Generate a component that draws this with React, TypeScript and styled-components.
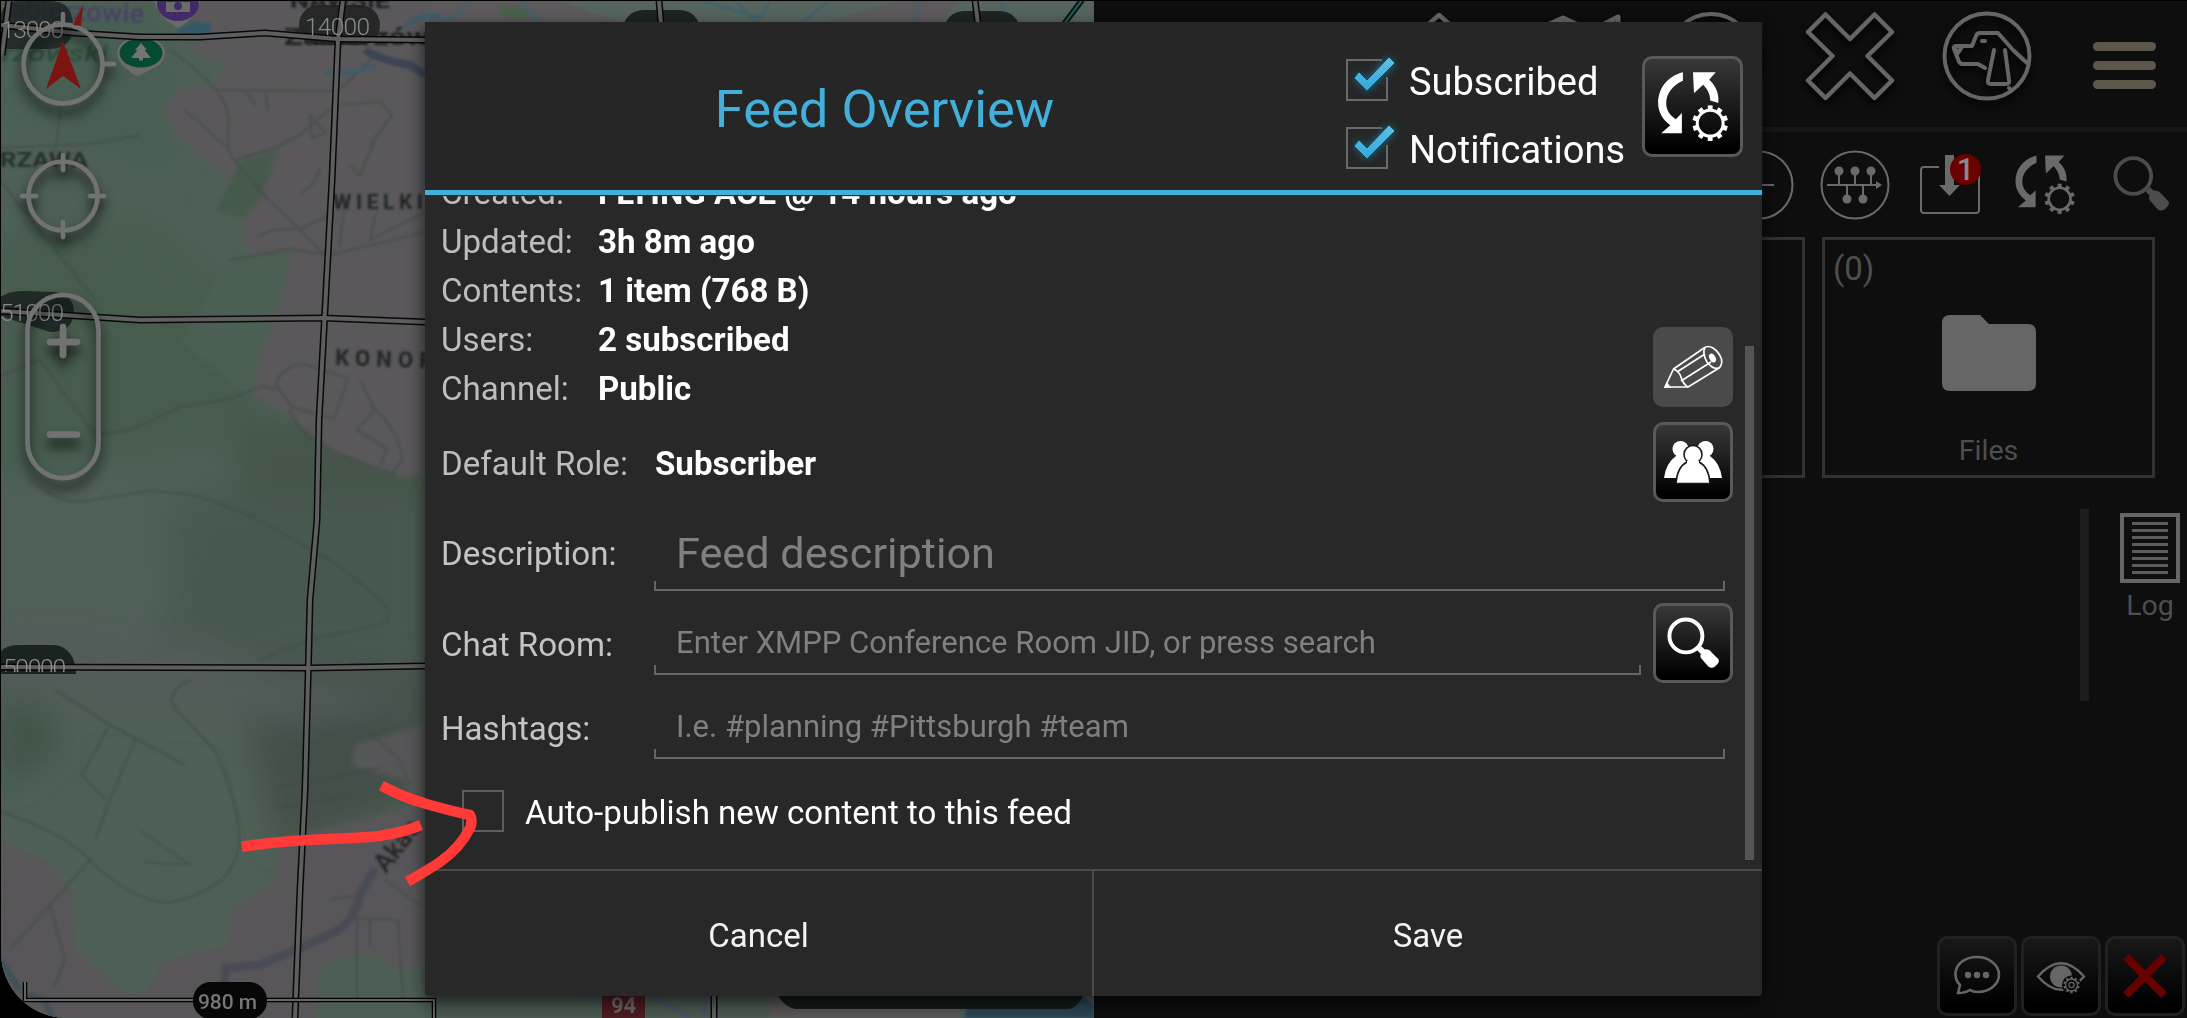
import React from 'react';
import styled, { createGlobalStyle } from 'styled-components';

const Global = createGlobalStyle`
  * { box-sizing: border-box; }
  body { margin: 0; background: #000; font-family: Roboto, "Noto Sans", sans-serif; }
`;

const Screen = styled.main`
  position: relative;
  display: flex;
  width: 2187px;
  height: 1018px;
  padding: 1px 0 0 1px;
  overflow: hidden;
  background: #000;
`;

const MapPane = styled.section`
  flex: 0 0 1093px;
  height: 1017px;
  overflow: hidden;
  border-bottom-left-radius: 66px;
  background: #4e6156;
`;

const MapSvg = styled.svg`
  display: block;
  width: 1093px;
  height: 1017px;
`;

/* ---------- right hand tool pane ---------- */

const ToolPane = styled.section`
  flex: 1;
  display: flex;
  flex-direction: column;
  min-width: 0;
  background: #0e0e0e;
`;

const TopBar = styled.header`
  display: flex;
  justify-content: flex-end;
  align-items: flex-start;
  flex: 0 0 131px;
  gap: 43px;
  padding: 8px 31px 0 0;
  border-bottom: 5px solid #171717;
`;

const TopIcon = styled.svg`
  flex: 0 0 94px;
  height: 94px;
  fill: none;
  stroke: #666;
  stroke-width: 4;
  stroke-linejoin: round;
  stroke-linecap: round;
  overflow: visible;
  filter: drop-shadow(0 5px 4px #000);
`;

const MenuIcon = styled.div`
  display: flex;
  flex-direction: column;
  gap: 10px;
  width: 63px;
  margin: 33px 0 0 16px;
`;

const MenuBar = styled.span`
  height: 9px;
  border-radius: 5px;
  background: #5c574b;
`;

const ToolRow = styled.nav`
  display: flex;
  justify-content: flex-end;
  align-items: center;
  flex: 0 0 105px;
  gap: 25px;
  padding-right: 12px;
`;

const ToolCell = styled.div`
  position: relative;
  display: flex;
  width: 70px;
  height: 70px;
`;

const ToolSvg = styled.svg`
  width: 70px;
  height: 70px;
  fill: none;
  stroke: #6a6a6a;
  stroke-width: 2;
`;

const Badge = styled.span`
  position: absolute;
  left: 35px;
  top: 4px;
  width: 31px;
  height: 31px;
  border-radius: 50%;
  background: #6a0000;
  color: #8a8a8a;
  font-size: 31px;
  font-weight: 500;
  line-height: 31px;
  text-align: center;
`;

const Cards = styled.div`
  display: flex;
  justify-content: flex-end;
  flex: 0 0 241px;
  gap: 17px;
  padding-right: 32px;
`;

const Card = styled.article`
  display: flex;
  flex-direction: column;
  width: 333px;
  padding: 9px 8px 6px;
  border: 3px solid #323232;
  color: #4e4e4e;
`;

const CardCount = styled.span`
  font-size: 33px;
  line-height: 40px;
`;

const FolderSvg = styled.svg`
  width: 94px;
  height: 76px;
  margin: 26px auto 0;
`;

const CardName = styled.span`
  margin-top: auto;
  font-size: 28.5px;
  line-height: 36px;
  text-align: center;
`;

const SideRow = styled.div`
  display: flex;
  justify-content: flex-end;
  align-items: flex-start;
  margin-top: 31px;
  padding-right: 7px;
`;

const SideTrack = styled.span`
  width: 9px;
  height: 192px;
  margin-right: 31px;
  background: #1d1d1d;
`;

const LogItem = styled.div`
  display: flex;
  flex-direction: column;
  align-items: center;
  width: 60px;
  padding-top: 4px;
  color: #4e4e4e;
  font-size: 28.5px;
  line-height: 34px;
`;

const LogPage = styled.div`
  display: flex;
  flex-direction: column;
  justify-content: space-between;
  width: 60px;
  height: 70px;
  margin-bottom: 6px;
  padding: 5px 8px;
  border: 4px solid #666;
`;

const LogLine = styled.span`
  height: 2.5px;
  background: #5c5c5c;
`;

const BottomRow = styled.footer`
  display: flex;
  justify-content: flex-end;
  gap: 4px;
  margin-top: auto;
  padding: 0 2px 2px 0;
`;

const DimButton = styled.button`
  width: 80px;
  height: 80px;
  padding: 0;
  border: 3px solid #212121;
  border-radius: 10px;
  background: linear-gradient(#181818, #000 90%);
`;

const DimSvg = styled.svg`
  display: block;
  width: 74px;
  height: 74px;
`;

/* ---------- dialog ---------- */

const Dialog = styled.section`
  position: absolute;
  left: 425px;
  top: 22px;
  display: flex;
  flex-direction: column;
  width: 1337px;
  height: 974px;
  border-radius: 2px 2px 4px 4px;
  background: #282828;
  box-shadow: 0 6px 18px rgba(0, 0, 0, 0.65);
`;

const DialogHeader = styled.header`
  display: flex;
  align-items: center;
  flex: 0 0 173px;
  padding-right: 19px;
  border-bottom: 5px solid #42b0da;
  background: #262626;
  box-shadow: 0 1px 1px #15323e;
  z-index: 1;
`;

const Title = styled.h1`
  flex: 1;
  margin: 5px 0 0;
  color: #42b0da;
  font-size: 52.5px;
  font-weight: 400;
  line-height: 62px;
  text-align: center;
`;

const Toggles = styled.div`
  display: flex;
  flex-direction: column;
  width: 298px;
  margin-top: 16px;
`;

const Toggle = styled.label`
  display: flex;
  align-items: center;
  height: 68px;
  color: #fff;
  font-size: 38px;
  line-height: 44px;
`;

const CheckSvg = styled.svg`
  width: 42px;
  height: 42px;
  margin: 0 21px 0 2px;
  overflow: visible;
`;

const ToggleText = styled.span`
  padding-top: 3px;
`;

const GlossButton = styled.button<{ $size: number; $flat?: boolean }>`
  flex: 0 0 ${(p) => p.$size}px;
  width: ${(p) => p.$size}px;
  height: ${(p) => p.$size}px;
  padding: 0;
  border: 3px solid ${(p) => (p.$flat ? '#4a4a4a' : '#595959')};
  border-radius: 10px;
  background: ${(p) => (p.$flat ? '#4a4a4a' : 'linear-gradient(#383838, #000 94%)')};
`;

const GlossSvg = styled.svg`
  display: block;
  width: 100%;
  height: 100%;
`;

const DialogBody = styled.div`
  position: relative;
  flex: 1;
  min-height: 0;
  overflow: hidden;
  padding: 0 29px 0 16px;
`;

const Summary = styled.div`
  display: flex;
  height: 334px;
  margin-top: -27px;
`;

const Facts = styled.div`
  flex: 1;
`;

const Fact = styled.div<{ $labelWidth: number; $gap?: number }>`
  display: grid;
  grid-template-columns: ${(p) => p.$labelWidth}px 1fr;
  margin-top: ${(p) => p.$gap || 0}px;
  font-size: 33.1px;
  line-height: 49px;
  white-space: nowrap;
`;

const Label = styled.span`
  color: #bdbdbd;
`;

const Value = styled.b`
  color: #fff;
  font-weight: 700;
`;

const Actions = styled.div`
  display: flex;
  flex-direction: column;
  justify-content: flex-end;
  gap: 15px;
`;

const FieldRow = styled.div<{ $gap: number; $height: number }>`
  display: flex;
  align-items: center;
  height: ${(p) => p.$height}px;
  margin-top: ${(p) => p.$gap}px;
`;

const FieldLabel = styled.span<{ $drop: number }>`
  flex: 0 0 213px;
  padding-top: ${(p) => p.$drop}px;
  color: #c4c4c4;
  font-size: 33.1px;
  line-height: 40px;
`;

const Field = styled.div<{ $size: number; $right: number; $height: number; $drop?: number }>`
  flex: 1;
  align-self: flex-start;
  display: flex;
  align-items: center;
  height: ${(p) => p.$height}px;
  margin-right: ${(p) => p.$right}px;
  padding: ${(p) => p.$drop || 0}px 0 0 20px;
  border: 0 solid #636363;
  border-width: 0 2px 2px;
  border-image: linear-gradient(to top, #666 10px, transparent 10px) 2;
  color: #808080;
  font-size: ${(p) => p.$size}px;
  white-space: nowrap;
`;

const AutoRow = styled.label`
  display: flex;
  align-items: center;
  height: 42px;
  margin: 23px 0 0 21px;
  color: #fff;
  font-size: 33.1px;
`;

const EmptyBox = styled.span`
  width: 42px;
  height: 42px;
  margin-right: 21px;
  border: 2px solid #5e5e5e;
`;

const AutoText = styled.span`
  padding-top: 2px;
`;

const ScrollThumb = styled.span`
  position: absolute;
  left: 1320px;
  top: 151px;
  width: 9px;
  height: 514px;
  background: #555;
`;

const DialogFooter = styled.footer`
  display: grid;
  grid-template-columns: 667px 1fr;
  flex: 0 0 127px;
  border-top: 2px solid #4a4a4a;
`;

const FooterButton = styled.button`
  padding: 4px 0 0;
  border: 0;
  background: transparent;
  color: #f2f2f2;
  font: 400 33px Roboto, sans-serif;
  & + & { border-left: 2px solid #4a4a4a; }
`;

const Sketch = styled.svg`
  position: absolute;
  left: 230px;
  top: 770px;
  width: 260px;
  height: 130px;
  fill: none;
  stroke: #ff3a37;
  stroke-width: 10.5;
  stroke-linecap: square;
  stroke-linejoin: round;
`;

/* ---------- drawings ---------- */

const Gear = ({ cx, cy, r, tooth, color, width }: { cx: number; cy: number; r: number; tooth: number; color: string; width: number }) => (
  <g stroke={color} fill="none" transform={`translate(${cx} ${cy})`}>
    <circle r={r} strokeWidth={width} />
    {Array.from({ length: 10 }, (_, i) => (
      <path key={i} d={`M0 ${-r}V${-r - tooth}`} strokeWidth={tooth} transform={`rotate(${i * 36})`} />
    ))}
  </g>
);

const SyncShape = ({ color }: { color: string }) => (
  <>
    <g fill={color} stroke="none">
      <path d="M40.5 16C25 20 16 32 16 46.500C16 55.500 20.500 63 28 68.500L19 76.500H39.500V56.500L33.500 62.500C27 58.500 24 53 24 46.500C24 37 30.500 29 40.500 24.500Z" />
      <path d="M50.500 16H73L66.500 23.500C73 29.500 76.500 37 75.500 46.500L67.500 44C67.500 38 65 33 60.500 28.500L51.500 37Z" />
    </g>
    <Gear cx={67.5} cy={66.5} r={12.8} tooth={4.8} color={color} width={3} />
  </>
);

const MagnifierShape = ({ color, glass = 4.5 }: { color: string; glass?: number }) => (
  <g>
    <circle cx="30" cy="30" r="16" fill="none" stroke={color} strokeWidth={glass} />
    <path d="M41 44L45 40L49 44L45 48Z" fill={color} stroke="none" />
    <path d="M45 47Q45 44 49 43Q53 43 55 46L61 52Q63 54 61 57L58 60Q55 62 52 60L45 52Q43 49 45 47Z" fill={color} stroke="none" />
  </g>
);

const Check = () => (
  <CheckSvg viewBox="0 0 42 42">
    <defs>
      <filter id="glow" x="-50%" y="-50%" width="200%" height="200%">
        <feGaussianBlur stdDeviation="4" />
      </filter>
      <linearGradient id="tick" x1="0" y1="0" x2="0" y2="1">
        <stop offset="0" stopColor="#62bfe2" />
        <stop offset="1" stopColor="#2eaadc" />
      </linearGradient>
    </defs>
    <path d="M36 1H1V41H41V18" fill="none" stroke="#6a6a6a" strokeWidth="2" />
    <path d="M8 19L13 14L20 22L43 -2L49 5L21 32Z" fill="#1e86b0" opacity=".7" filter="url(#glow)" />
    <path d="M8 19L13 13L21 21L43 -2L49 4L21 32Z" fill="url(#tick)" stroke="#15455a" strokeWidth="1" />
  </CheckSvg>
);

const gridLines = [
  'M9 0L2 55',
  'M0 25L75 33L140 37L200 37L265 33L338 39L425 40',
  'M0 311L140 320L323 318L425 322',
  'M0 667L308 668L425 666',
  'M343 0L338 40L332 180L325 310L319 420L317 520L310 600L308 680L305 790L300 890L295 1018',
  'M659 0L661 24',
  'M975 0L978 24',
  'M714 990V1018',
];

const roads = [
  'M55 150Q60 120 60 105',
  'M0 148L90 144L140 135',
  'M170 50Q228 90 229 120Q225 155 236 162L268 200Q290 218 310 240L325 256',
  'M215 90L335 91L345 85L380 50',
  'M236 160L275 148L300 135L335 105L380 102L392 115L370 145',
  'M258 236Q270 228 300 229L328 216',
  'M230 260L290 249L330 255L425 232',
  'M0 180L95 300',
  'M0 376L40 360L95 435L130 430L180 407L230 399L262 386L280 390',
  'M276 385Q280 367 303 364L348 378L334 419L292 407L276 385M290 408Q295 440 360 462L395 475',
  'M360 380L375 410L357 430L387 449L380 465M370 405Q400 430 402 460L390 475',
  'M30 480Q60 505 85 501L150 491L185 494Q230 500 320 555Q350 570 389 610Q390 620 380 625L320 637L260 660',
  'M55 690L110 725L185 765M108 728L82 775L106 800M135 740L110 800L95 840',
  'M0 812Q60 830 90 860Q130 900 168 903Q230 890 238 850Q245 820 215 750Q170 705 171 700Q175 685 190 681',
  'M90 860L50 905L10 950M50 905L65 960L55 985M145 862L190 865L140 830',
  'M277 788L380 768M277 808L350 795M320 735L365 728L400 760L410 785',
  'M330 900L357 895V1000M357 918L398 920L403 1000M385 880L420 905M370 918V945',
  'M345 200L340 245M375 215L370 240L430 210M185 110L230 150M245 90L255 105M265 90L268 110',
  'M310 115L325 133L312 138Z M375 140L360 175L350 165M300 195L312 185L320 170',
];

const MapPicture = () => (
  <MapSvg viewBox="1 1 1093 1017">
    <defs>
      <filter id="soft"><feGaussianBlur stdDeviation="1" /></filter>
      <filter id="wash" x="-20%" y="-20%" width="140%" height="140%"><feGaussianBlur stdDeviation="16" /></filter>
      <filter id="area"><feGaussianBlur stdDeviation="2.500" /></filter>
      <filter id="drop" x="-40%" y="-40%" width="180%" height="190%">
        <feDropShadow dx="0" dy="9" stdDeviation="6" floodColor="#000" floodOpacity=".8" />
      </filter>
      <clipPath id="cut50"><rect x="0" y="640" width="90" height="32" /></clipPath>
    </defs>
    <rect width="1094" height="1018" fill="#4e6056" />
    <g filter="url(#wash)">
      <path d="M0 0H150L190 130L160 180L110 150L0 110Z" fill="#4a5f52" />
      <path d="M0 240L150 220L270 330L260 430L0 480Z" fill="#475b4e" />
      <path d="M180 500L425 470V660H150Z" fill="#475950" />
      <path d="M230 420H425V500H240Z" fill="#445549" />
      <path d="M0 480L120 460L180 600L120 660L0 620Z" fill="#4f6158" />
      <path d="M230 660L425 670V800L280 850Z" fill="#445048" />
      <path d="M0 620L200 640L290 680L425 700L280 720L0 690Z" fill="#525b58" />
      <path d="M0 790L60 750L40 700L0 700Z" fill="#415346" />
    </g>
    <g filter="url(#area)">
      <path d="M190 -10H435V470L405 478L380 470L330 450L290 415L253 395L262 350L272 322L245 240L243 215L222 172L175 135L163 108L178 90L212 86L226 62L195 55Z" fill="#5a585a" />
      <path d="M242 160L278 150L262 195L243 220L215 210Z" fill="#445a4b" />
      <path d="M230 260L293 250L280 300L268 330L250 400L180 340Z" fill="#4b5e52" />
      <path d="M0 840L45 860L72 890L76 950L115 985L130 996L145 990L165 960L228 945L232 910L275 880L282 840L400 810L435 790V1028H-10Z" fill="#585759" />
      <path d="M355 745L425 725V830L412 815L405 780L352 765Z" fill="#575658" />
      <path d="M315 1028L320 970Q340 950 375 955L400 970L435 960V1028Z" fill="#4d5f55" />
    </g>
    <g filter="url(#soft)">
      <path d="M425 0H1094V24H425Z" fill="#566560" />
      <path d="M425 0H560L620 24H425ZM900 0H960L940 24H820Z" fill="#5c5a5c" />
      <path d="M500 5L530 10L522 20L500 15Z" fill="#496449" />
      <path d="M425 18H455L470 0M520 0L540 24M700 0L760 18L770 0M735 0L757 24M800 24L830 0M915 24L920 0M1000 0L1010 24" fill="none" stroke="#3e6470" strokeWidth="2.500" />
      <path d="M425 990H1094V1018H425Z" fill="#4a5a51" />
      <path d="M580 995L640 1018M650 995L690 1018M705 995V1018" fill="none" stroke="#4b5063" strokeWidth="4" />
      <path d="M770 990H960V1018H770Z" fill="#5a5557" />
      <path d="M968 990H1075L1094 1005V1018H965Z" fill="#2a4552" />
      <g fill="none" stroke="#414a49" strokeWidth="1.500" opacity=".75">
        {roads.map((d) => <path key={d} d={d} />)}
      </g>
      <path d="M365 50Q380 60 410 65L425 75" fill="none" stroke="#3c4454" strokeWidth="8" />
      <path d="M325 73L355 72L375 65M405 26L425 15H440" fill="none" stroke="#3e5d69" strokeWidth="4" />
      <path d="M177 30L192 22L210 23L211 35L190 40Z" fill="#345968" />
      <path d="M223 1000L226 968L260 965L300 948L335 932Q355 920 360 895L375 868" fill="none" stroke="#494b54" strokeWidth="8" />
      <path d="M0 960L20 990M28 995L45 1000L52 1018" fill="none" stroke="#3f5159" strokeWidth="6" />
    </g>
    <path d="M117 52Q117 60 124 67L133 74Q137 77 142 74L158 66Q165 60 165 52Q163 38 141 37Q119 38 117 52Z" fill="#6b6b6b" />
    <ellipse cx="141" cy="53" rx="21.500" ry="14.500" fill="#064a32" />
    <path d="M141 43L147 50H144.500L151 58H143V60.500H139V58H131L137.500 50H135Z" fill="#747474" />
    <path d="M155 0Q155 15 178 28Q200 15 200 0Z" fill="#6b6b6b" />
    <ellipse cx="178" cy="4" rx="21" ry="17" fill="#432a66" />
    <path d="M166 2H190V12H166Z" fill="#6b6b6b" />
    <circle cx="178" cy="6" r="4" fill="#432a66" />
    <g fontFamily="Roboto, sans-serif" fontWeight="700" filter="url(#soft)">
      <text x="10" y="18" fontSize="26" fontWeight="500" fill="#4a3f68" transform="rotate(2 8 18)" textLength="134" lengthAdjust="spacingAndGlyphs">abierzowie</text>
      <text x="2" y="61" fontSize="22" fontStyle="italic" fontWeight="500" fill="#2f4b3d" textLength="106" lengthAdjust="spacingAndGlyphs">rzowski</text>
      <text x="0" y="167" fontSize="21" fill="#25302b" textLength="88" lengthAdjust="spacingAndGlyphs">RZAWA</text>
      <text x="290" y="8" fontSize="20" fill="#232425" textLength="100" lengthAdjust="spacingAndGlyphs">NAWSIE</text>
      <text x="284" y="45" fontSize="24" fill="#232425" textLength="145" lengthAdjust="spacingAndGlyphs">Zabierzów</text>
      <text x="333" y="209" fontSize="21" fill="#242628" textLength="90">WIELKI</text>
      <text x="335" y="365" fontSize="22" fill="#242628" textLength="96" transform="rotate(2 335 365)">KONOF</text>
      <text x="386" y="874" fontSize="26" fontWeight="500" fill="#242628" transform="rotate(-52 386 874)">Akac</text>
    </g>
    <path d="M0 22Q0 1 20 1H50Q73 1 73 26Q73 48 50 49H0Z" fill="#151a19" opacity=".7" />
    <rect x="299" y="5" width="81" height="40" rx="20" fill="#222525" opacity=".93" />
    <path d="M0 297Q10 291 25 291L55 292Q74 296 74 311Q74 332 50 332L0 316Z" fill="#1b2321" opacity=".9" />
    <path d="M0 652Q6 645 20 645H55Q75 648 76 674H0Z" fill="#1b2321" />
    <rect x="623" y="10" width="77" height="40" rx="20" fill="#1d2422" />
    <rect x="944" y="11" width="76" height="40" rx="20" fill="#1d2422" />
    <g fill="none" strokeLinejoin="round">
      {gridLines.map((d) => <path key={d} d={d} stroke="#080808" strokeWidth="7" />)}
      {gridLines.map((d) => <path key={d} d={d} stroke="#5e5e5e" strokeWidth="4" />)}
      <path d="M1082 0L1064 24" stroke="#0b1616" strokeWidth="6" />
      <path d="M1082 0L1064 24" stroke="#1d625f" strokeWidth="2" />
    </g>
    <g fontFamily="Roboto, sans-serif" fontWeight="300" fontSize="24.500" fill="#8a8a8a">
      <text x="1" y="38" textLength="63">13000</text>
      <text x="305" y="35" textLength="65">14000</text>
      <text x="0" y="321" textLength="64">51000</text>
      <text x="3" y="676" textLength="63" clipPath="url(#cut50)">50000</text>
    </g>
    <path d="M25 982V1000H434V1018" fill="none" stroke="#000" strokeWidth="4.500" />
    <path d="M25 982V1000H434V1018" fill="none" stroke="#666" strokeWidth="2" />
    <rect x="193" y="982" width="74" height="37" rx="18" fill="#070707" />
    <text x="198" y="1009" fontFamily="Roboto, sans-serif" fontWeight="500" fontSize="21" fill="#777" textLength="59">980 m</text>
    <rect x="602" y="994" width="43" height="26" fill="#4c1c20" />
    <text x="611" y="1013" fontFamily="Roboto, sans-serif" fontWeight="700" fontSize="22" fill="#6e6768">94</text>
    <path d="M775 990H1086Q1078 1009 1068 1009H795Q782 1006 775 990Z" fill="#151a1a" />
    <g fill="none" stroke="#727272" strokeWidth="4.500" strokeLinecap="round" filter="url(#drop)">
      <circle cx="63" cy="64" r="39.500" />
      <path d="M63 14V24M105 64H114" />
    </g>
    <path d="M63 41L81 89L63 76L46 89Z" fill="#7c1512" />
    <path d="M83 5L73 25L81 26Z" fill="#7c1512" />
    <g fill="none" stroke="#727272" strokeWidth="4.500" strokeLinecap="round" filter="url(#drop)">
      <circle cx="63" cy="196" r="34.500" />
      <path d="M63 155V170M63 222V237M22 196H36M90 196H104" />
      <rect x="27.500" y="295" width="71" height="183" rx="35.500" />
      <path d="M50 342H77M63 327V355M50 434.500H77" strokeWidth="6.500" />
    </g>
  </MapSvg>
);

const facts: [string, string][] = [
  ['Created:', 'FLYING ACE @ 14 hours ago'],
  ['Updated:', '3h 8m ago'],
  ['Contents:', '1 item (768 B)'],
  ['Users:', '2 subscribed'],
  ['Channel:', 'Public'],
];

export default function App() {
  return (
    <Screen>
      <Global />
      <MapPane><MapPicture /></MapPane>

      <ToolPane>
        <TopBar>
          <TopIcon viewBox="0 0 94 94"><path strokeWidth="4.500" d="M47 6L88 42L76 58V90H18V58L6 42Z" /></TopIcon>
          <TopIcon viewBox="0 0 94 94"><path strokeWidth="5" d="M5 22L34 9L62 22L89 8V74L60 88L32 74L5 88ZM34 9V74" /></TopIcon>
          <TopIcon viewBox="0 0 94 94"><circle cx="45" cy="47" r="42" /></TopIcon>
          <TopIcon viewBox="0 0 94 94">
            <path strokeWidth="4.500" d="M22.500 5.500L47 30L71.500 5.500L89 23L64.500 47L89 71.500L71.500 89L47 64.500L22.500 89L5 71.500L29.500 47L5 23Z" />
          </TopIcon>
          <TopIcon viewBox="0 0 94 94">
            <circle cx="47" cy="47" r="42.500" />
            <path d="M45 59L38 55H23Q19 55 18 50L14 40Q13 37 16 37H32L36 27Q37 24 40 24H58L73 41L87 54M15 39L18 44L22 38" />
            <path d="M42 32H45" />
            <path d="M54 41L48 71Q47 75 51 75H66Q70 75 69 71L65 41M69 79L70 80" />
          </TopIcon>
          <MenuIcon><MenuBar /><MenuBar /><MenuBar /></MenuIcon>
        </TopBar>

        <ToolRow>
          <ToolCell>
            <ToolSvg viewBox="0 0 70 70"><circle cx="34" cy="35" r="33.500" /><path d="M20 35H49" /></ToolSvg>
          </ToolCell>
          <ToolCell>
            <ToolSvg viewBox="0 0 70 70">
              <circle cx="35" cy="35" r="33.500" />
              <path d="M7 35H60M19 35V20M35 35V20M51 35V20M27 35V50M43 35V50" />
              <g fill="#6a6a6a" stroke="none">
                <circle cx="19" cy="21" r="4.500" /><circle cx="35" cy="21" r="4.500" /><circle cx="51" cy="21" r="4.500" />
                <circle cx="27" cy="49" r="4.500" /><circle cx="43" cy="49" r="4.500" />
                <path d="M56 31L62 35L56 39Z" />
              </g>
            </ToolSvg>
          </ToolCell>
          <ToolCell>
            <ToolSvg viewBox="0 0 70 70">
              <path d="M24 17H9Q6 17 6 20V60Q6 63 9 63H61Q64 63 64 60V24" />
              <path d="M30 5H39V35H45L34.500 46L24 35H30Z" fill="#6a6a6a" stroke="none" />
            </ToolSvg>
            <Badge>1</Badge>
          </ToolCell>
          <ToolCell>
            <ToolSvg viewBox="9.6 9.6 81.7 81.7"><SyncShape color="#6a6a6a" /></ToolSvg>
          </ToolCell>
          <ToolCell>
            <ToolSvg viewBox="1.5 3 74 74"><g transform="translate(-4 -5) scale(1.18)"><MagnifierShape color="#4c4c4c" glass={3.4} /></g></ToolSvg>
          </ToolCell>
        </ToolRow>

        <Cards>
          <Card />
          <Card>
            <CardCount>(0)</CardCount>
            <FolderSvg viewBox="0 0 94 76">
              <path d="M8 0H38L47 9H86Q94 9 94 17V68Q94 76 86 76H8Q0 76 0 68V8Q0 0 8 0Z" fill="#666" />
            </FolderSvg>
            <CardName>Files</CardName>
          </Card>
        </Cards>

        <SideRow>
          <SideTrack />
          <LogItem>
            <LogPage>{Array.from({ length: 8 }, (_, i) => <LogLine key={i} />)}</LogPage>
            Log
          </LogItem>
        </SideRow>

        <BottomRow>
          <DimButton>
            <DimSvg viewBox="0 0 74 74">
              <path d="M18 54L20 46Q15 41 15.500 34C16 25 25 18 37 18S59 26 59 35.500S50 53 38 53Q33 53 30 51Q25 54 18 54Z" fill="none" stroke="#666" strokeWidth="2.600" />
              <g fill="#666"><circle cx="28" cy="36" r="3.200" /><circle cx="37" cy="36" r="3.200" /><circle cx="46" cy="36" r="3.200" /></g>
            </DimSvg>
          </DimButton>
          <DimButton>
            <DimSvg viewBox="0 0 74 74">
              <path d="M14 37.500Q37 11 60 37.500Q37 64 14 37.500Z" fill="none" stroke="#666" strokeWidth="2.400" />
              <circle cx="37" cy="37.500" r="11" fill="#666" />
              <circle cx="47.500" cy="46" r="9.500" fill="#080808" />
              <Gear cx={47.5} cy={46} r={6} tooth={2.2} color="#666" width={1.3} />
              <circle cx="47.500" cy="46" r="2.600" fill="none" stroke="#666" strokeWidth="1.200" />
            </DimSvg>
          </DimButton>
          <DimButton>
            <DimSvg viewBox="0 0 74 74"><path d="M18 18L56 56M56 18L18 56" stroke="#680000" strokeWidth="8" /></DimSvg>
          </DimButton>
        </BottomRow>
      </ToolPane>

      <Dialog>
        <DialogHeader>
          <Title>Feed Overview</Title>
          <Toggles>
            <Toggle><Check /><ToggleText>Subscribed</ToggleText></Toggle>
            <Toggle><Check /><ToggleText>Notifications</ToggleText></Toggle>
          </Toggles>
          <GlossButton $size={101}>
            <GlossSvg viewBox="3 3 94 94"><SyncShape color="#fff" /></GlossSvg>
          </GlossButton>
        </DialogHeader>

        <DialogBody>
          <Summary>
            <Facts>
              {facts.map(([label, value]) => (
                <Fact key={label} $labelWidth={157}><Label>{label}</Label><Value>{value}</Value></Fact>
              ))}
              <Fact $labelWidth={214} $gap={26}><Label>Default Role:</Label><Value>Subscriber</Value></Fact>
            </Facts>
            <Actions>
              <GlossButton $size={80} $flat>
                <GlossSvg viewBox="3 3 74 74">
                  <g fill="none" stroke="#fff" strokeWidth="1.700" strokeLinejoin="round">
                    <path d="M12 60L20.500 42L51 21Q55 18 60 21Q66 25 68.500 32Q69.500 38 66 41L35 60Z" />
                    <path d="M20.500 42Q26 44 28 50Q30 57 35 60M24 45L52 27M28 54L58 35" />
                    <path d="M52 20Q49 27 54 35Q60 43 66 41" />
                  </g>
                  <ellipse cx="59.500" cy="31" rx="3" ry="4.800" fill="#fff" transform="rotate(-28 59.500 31)" />
                  <path d="M11 61L14 55L18 60.500Z" fill="#fff" />
                </GlossSvg>
              </GlossButton>
              <GlossButton $size={80}>
                <GlossSvg viewBox="3 3 74 74">
                  <g fill="#fff">
                    <circle cx="27.500" cy="27" r="8" /><circle cx="52.500" cy="27" r="8" />
                    <path d="M11 56Q13 41 23 34H34L30 56ZM69 56Q67 41 57 34H46L50 56Z" />
                  </g>
                  <g fill="#fff" stroke="#151515" strokeWidth="1.500">
                    <path d="M23 61.500Q24 45 34 40H46Q56 45 57 61.500Z" />
                    <circle cx="40" cy="32.500" r="9" />
                  </g>
                  <path d="M34 39H46V43H34Z" fill="#fff" />
                </GlossSvg>
              </GlossButton>
            </Actions>
          </Summary>

          <FieldRow $gap={14} $height={75}>
            <FieldLabel $drop={0}>Description:</FieldLabel>
            <Field $size={43.2} $right={8} $height={75} $drop={1}>Feed description</Field>
          </FieldRow>
          <FieldRow $gap={12} $height={80}>
            <FieldLabel $drop={4}>Chat Room:</FieldLabel>
            <Field $size={31.05} $right={12} $height={72} $drop={9}>Enter XMPP Conference Room JID, or press search</Field>
            <GlossButton $size={80}>
              <GlossSvg viewBox="3 3 74 74"><g transform="translate(2 2) scale(1.03)"><MagnifierShape color="#fff" glass={3.8} /></g></GlossSvg>
            </GlossButton>
          </FieldRow>
          <FieldRow $gap={4} $height={80}>
            <FieldLabel $drop={4}>Hashtags:</FieldLabel>
            <Field $size={31} $right={8} $height={72} $drop={9}>I.e. #planning #Pittsburgh #team</Field>
          </FieldRow>
          <AutoRow><EmptyBox /><AutoText>Auto-publish new content to this feed</AutoText></AutoRow>
          <ScrollThumb />
        </DialogBody>

        <DialogFooter>
          <FooterButton>Cancel</FooterButton>
          <FooterButton>Save</FooterButton>
        </DialogFooter>
      </Dialog>

      <Sketch viewBox="230 770 260 130">
        <path d="M247 846Q280 841 330 839T384 835Q400 833 416 827" />
        <path d="M386 788Q405 798 430 805Q455 812 470 815Q473 821 470 828Q460 848 440 862Q428 870 412 879" />
      </Sketch>
    </Screen>
  );
}
